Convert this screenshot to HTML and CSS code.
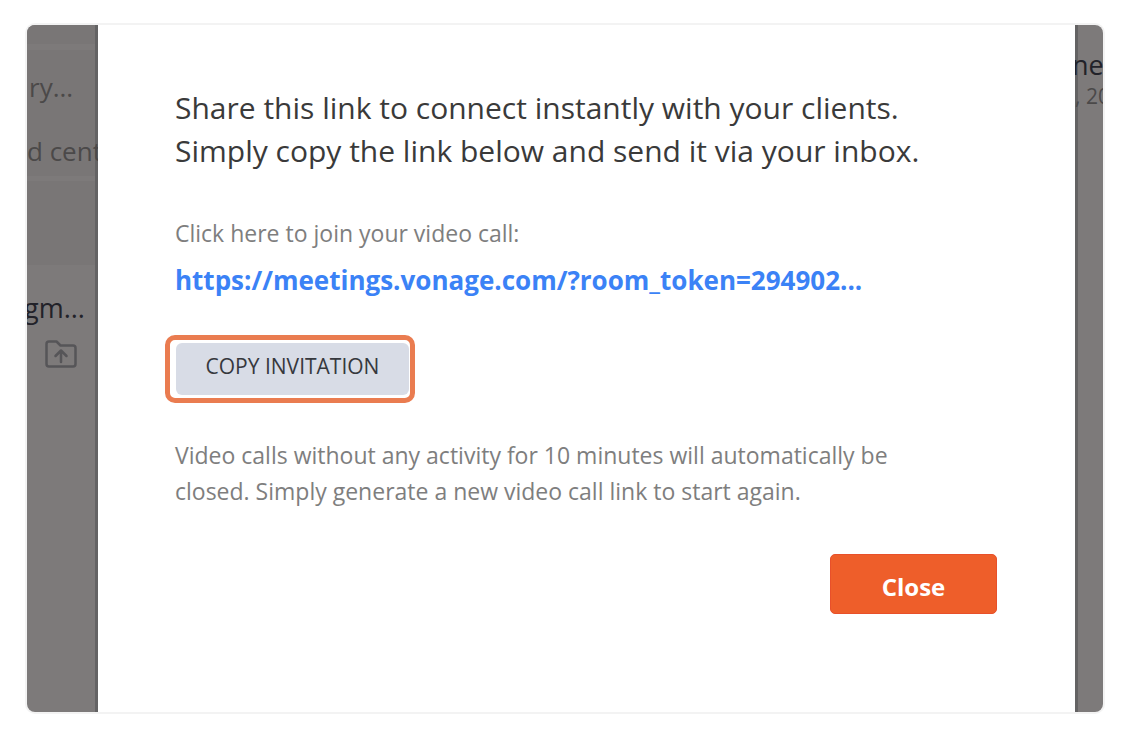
FILE: index.html
```html
<!DOCTYPE html>
<html lang="en">
<head>
    <meta charset="UTF-8">
    <meta name="viewport" content="width=device-width, initial-scale=1.0">
    <title>Video call invitation</title>
    <link rel="stylesheet" href="styles.css">
</head>
<body>
<div class="frame">
    <aside class="side">
        <div class="side-top"></div>
        <div class="side-card">
            <p class="side-title">ry...</p>
            <p class="side-text">d cent</p>
        </div>
        <div class="side-gap"></div>
        <div class="side-list">
            <p class="side-name">gm...</p>
            <svg class="folder" viewBox="0 0 32 28" width="32" height="28">
                <path d="M4 1.500h7.500l4 4H28q2.500 0 2.500 2.500v16q0 2.500-2.500 2.500H4q-2.500 0-2.500-2.500V4q0-2.500 2.500-2.500z"/>
                <path d="M16 22V11M10.500 16L16 10.500l5.500 5.500"/>
            </svg>
        </div>
    </aside>
    <main class="modal">
        <h1 class="title">Share this link to connect instantly with your clients.<br>Simply copy the link below and send it via your inbox.</h1>
        <p class="note">Click here to join your video call:</p>
        <a class="link" href="#">https://meetings.vonage.com/?room_token=294902...</a>
        <div class="highlight">
            <button class="copy" type="button">COPY INVITATION</button>
        </div>
        <p class="note">Video calls without any activity for 10 minutes will automatically be<br>closed. Simply generate a new video call link to start again.</p>
        <button class="close" type="button">Close</button>
    </main>
    <aside class="side side-right">
        <p class="side-name">ne</p>
        <p class="side-date">, 20</p>
    </aside>
</div>
</body>
</html>
```

FILE: styles.css
```css
* {
    box-sizing: border-box;
    margin: 0;
    padding: 0;
}
body{
    padding: 25px 29px 38px 27px;
    background: #fff;
    font-family: "Open Sans", "Noto Sans", sans-serif;
}
.frame{
    display: flex;
    min-height: calc(100vh - 63px);
    overflow: hidden;
    border-radius: 8px;
    box-shadow: 0 0 0 2px #f3f3f3;
}
.side{
    width: 71px;
    flex: none;
    overflow: hidden;
    white-space: nowrap;
    background: #7d7a7a;
    box-shadow: inset -3px 0 #646364;
    color: #4b4949;
}
.side-top{
    height: 19px;
    background: #797676;
    box-shadow: inset -3px 0 #646364;
}
.side-card{
    height: 126px;
    margin-top: 6px;
    padding-top: 19px;
    background: #797676;
    box-shadow: inset -3px 0 #646364;
}
.side-title{
    padding-left: 2px;
    font-size: 26px;
    line-height: 36px;
}
.side-text{
    margin-top: 30px;
    font-size: 26px;
    line-height: 32px;
}
.side-gap{
    height: 84px;
    margin-top: 5px;
    background: #797676;
    box-shadow: inset -3px 0 #646364;
}
.side-list{
    padding-top: 26px;
}
.side-name{
    font-size: 27px;
    line-height: 34px;
    color: #222229;
}
.side-list .side-name{
    margin-left: -3px;
}
.folder{
    display: block;
    margin: 15px 0 0 18px;
    fill: none;
    stroke: #565558;
    stroke-width: 2.500;
    stroke-linecap: round;
    stroke-linejoin: round;
}
.side-right{
    width: 28px;
    padding-top: 23px;
    box-shadow: inset 3px 0 #646364;
}
.side-right .side-name{
    margin-left: -3px;
}
.side-date{
    font-size: 21px;
    line-height: 28px;
}
.modal{
    display: flex;
    flex: 1;
    flex-direction: column;
    align-items: flex-start;
    min-width: 0;
    padding: 61px 78px 98px 77px;
    background: #fff;
}
.title{
    font-size: 30px;
    font-weight: 400;
    line-height: 43px;
    color: #3a3a3a;
}
.note{
    font-size: 23px;
    line-height: 36px;
    color: #7e7e7e;
}
.title + .note{
    margin-top: 43px;
}
.link{
    margin-top: 11px;
    font-size: 26px;
    font-weight: 700;
    line-height: 36px;
    color: #3b82f6;
    text-decoration: none;
}
.highlight{
    display: flex;
    margin: 37px 0 34px -10px;
    padding: 3px 1px 3px 6px;
    border: 5px solid #ea7c50;
    border-radius: 10px;
}
.copy{
    width: 233px;
    height: 52px;
    padding-bottom: 6px;
    border: 0;
    border-radius: 6px;
    background: #d8dce6;
    font: 400 21px/30px "Open Sans", "Noto Sans", sans-serif;
    color: #36383d;
}
.close{
    align-self: flex-end;
    width: 167px;
    height: 60px;
    margin-top: 45px;
    padding-top: 6px;
    border: 1px solid #e8502a;
    border-radius: 5px;
    background: #ee5e2a;
    font: 700 24px/32px "Open Sans", "Noto Sans", sans-serif;
    color: #fff;
}
```
